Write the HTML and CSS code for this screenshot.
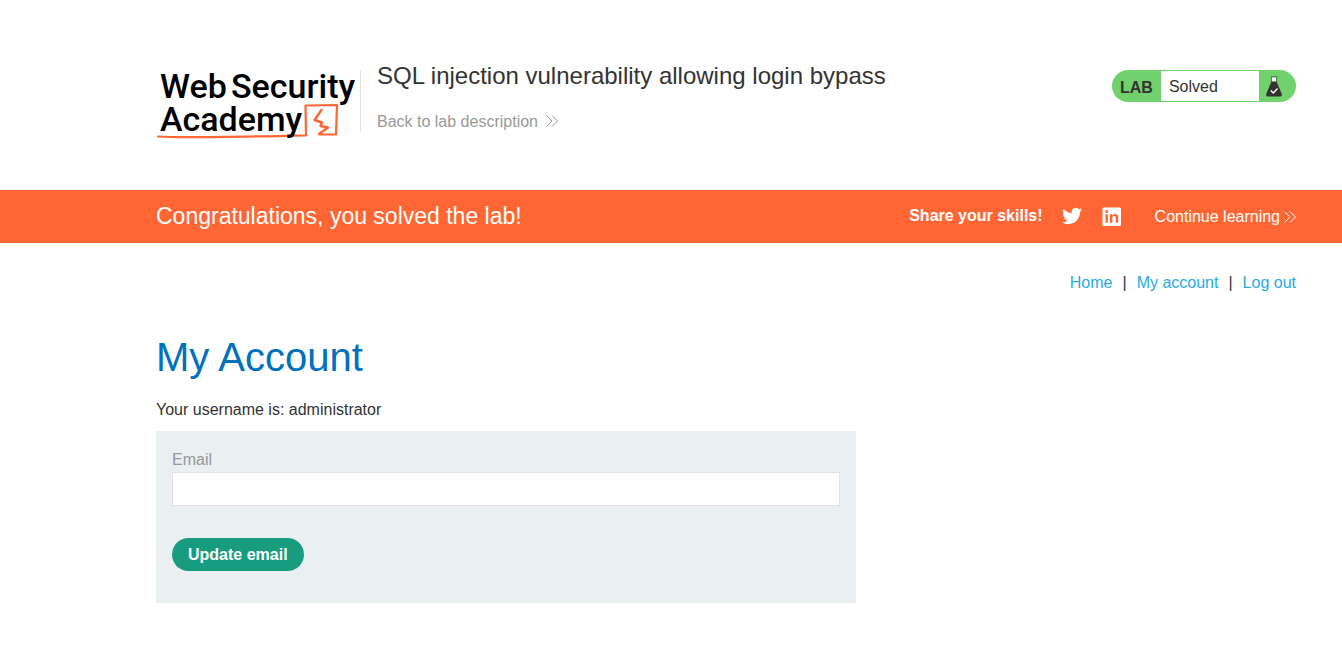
FILE: index.html
```html
<!DOCTYPE html>
<html lang="en">
<head>
<meta charset="utf-8">
<meta name="viewport" content="width=device-width, initial-scale=1">
<title>SQL injection vulnerability allowing login bypass</title>
<link rel="stylesheet" href="styles.css">
</head>
<body>
<header class="lab-header wrap">
  <svg class="logo" width="204" height="80" viewBox="0 0 204 80" role="img" aria-label="Web Security Academy">
    <path class="logo-line" d="M2 76.500C20 78 80 77 150 75.300L149.500 45.500L181 45L180 74.500L164 74.500" stroke-width="2.200"/>
    <path class="logo-line" d="M165.500 50L158.500 60L166 62.500L164.500 66L172 67.500L163 74" stroke-width="2.400"/>
    <text class="logo-text" x="4" y="38">Web</text>
    <text class="logo-text" x="75" y="38">Security</text>
    <text class="logo-text" x="4" y="71">Academy</text>
  </svg>
  <div class="title-block">
    <h2 class="lab-title">SQL injection vulnerability allowing login bypass</h2>
    <a class="back-link" href="#">Back to lab description
      <svg class="chevrons" width="12" height="14" viewBox="0 0 12 14" aria-hidden="true"><path d="M.5.5L6 6L.5 11.500M6 .5L11.500 6L6 11.500"/></svg>
    </a>
  </div>
  <div class="lab-status">
    <span class="status-tag">LAB</span>
    <span class="status-text">Solved</span>
    <svg class="flask" width="16" height="21" viewBox="0 0 16 21" aria-hidden="true">
      <path d="M5.500 1.500H10.500V6H5.500Z" fill="#fff"/>
      <path d="M4.500.7H11.500M5.500 1V6M10.500 1V6" fill="none" stroke="#55795a" stroke-width="1"/>
      <path d="M5.500 5.500H10.500L15.800 18Q16.400 20.500 14 20.500H2Q-.4 20.500.2 18Z" fill="#333332"/>
      <path d="M4.800 14.500L7.300 17L11.500 12.500" fill="none" stroke="#fff" stroke-width="1.400"/>
    </svg>
  </div>
</header>
<section class="banner wrap">
  <h4 class="banner-title">Congratulations, you solved the lab!</h4>
  <div class="share">
    <strong class="share-label">Share your skills!</strong>
    <a class="social" href="#" aria-label="Share on Twitter"><svg width="20" height="20" viewBox="0 0 24 24"><path fill="#fff" d="M23.953 4.570a10 10 0 0 1-2.825.775 4.958 4.958 0 0 0 2.163-2.723c-.951.555-2.005.959-3.127 1.184a4.920 4.920 0 0 0-8.384 4.482C7.690 8.095 4.067 6.130 1.640 3.162a4.822 4.822 0 0 0-.666 2.475c0 1.710.870 3.213 2.188 4.096a4.904 4.904 0 0 1-2.228-.616v.060a4.923 4.923 0 0 0 3.946 4.827 4.996 4.996 0 0 1-2.212.085 4.936 4.936 0 0 0 4.604 3.417 9.867 9.867 0 0 1-6.102 2.105c-.390 0-.779-.023-1.170-.067a13.995 13.995 0 0 0 7.557 2.209c9.053 0 13.998-7.496 13.998-13.985 0-.210 0-.420-.015-.630A9.935 9.935 0 0 0 24 4.590z"/></svg></a>
    <a class="social" href="#" aria-label="Share on LinkedIn"><svg width="20" height="20" viewBox="0 0 20 20"><rect x=".5" y="1.500" width="18.500" height="18.500" rx="1.500" fill="#fff"/><g fill="#ff6633"><circle cx="4.700" cy="5.500" r="1.500"/><path d="M3.500 8.200H5.900V16.700H3.500ZM7.900 8.200H10.200V9.500C11.400 7.300 16.200 7.100 16.200 11.500V16.700H13.800V12C13.800 9.300 10.300 9.500 10.300 12V16.700H7.900Z"/></g></svg></a>
    <a class="continue" href="#">Continue learning
      <svg class="chevrons" width="12" height="12" viewBox="0 0 12 12" aria-hidden="true"><path d="M.5.5L6 6L.5 11.500M6 .5L11.500 6L6 11.500"/></svg>
    </a>
  </div>
</section>
<main class="content wrap">
  <nav class="nav" aria-label="Main">
    <a href="#">Home</a><span>|</span><a href="#">My account</a><span>|</span><a href="#">Log out</a>
  </nav>
  <h1 class="page-title">My Account</h1>
  <p class="username">Your username is: administrator</p>
  <form class="email-form">
    <label class="field-label" for="email">Email</label>
    <input class="field" id="email" type="email" name="email">
    <button class="submit" type="submit">Update email</button>
  </form>
</main>
</body>
</html>
```
FILE: styles.css
```css
* {
  box-sizing: border-box;
}

body {
  margin: 0;
  background: #fff;
  color: #333332;
  font: 16px/24px "Liberation Sans", Arial, sans-serif;
}

h1, h2, h4, p {
  margin: 0;
  font-weight: 400;
}

a {
  text-decoration: none;
}

.wrap {
  padding-left: 156px;
  padding-right: 46px;
}

.lab-header {
  display: flex;
  align-items: flex-start;
  padding-top: 60px;
  padding-bottom: 50px;
}

.logo {
  display: block;
  flex: none;
}

.logo-text {
  font: 500 34px Roboto, sans-serif;
  fill: #000;
}

.logo-line {
  fill: none;
  stroke: #ff6633;
  stroke-linecap: round;
  stroke-linejoin: round;
}

.title-block {
  flex: 1;
  margin-top: 10px;
  padding-left: 16px;
  border-left: 1px solid #e2e2e2;
  height: 62px;
}

.lab-title {
  margin-top: -10px;
  font-size: 24px;
  line-height: 32px;
}

.back-link {
  display: inline-flex;
  align-items: center;
  gap: 8px;
  margin-top: 18px;
  color: #999;
}

.chevrons {
  fill: none;
  stroke: currentColor;
  stroke-width: 1;
}

.lab-status {
  display: flex;
  align-items: center;
  width: 184px;
  height: 32px;
  margin-top: 10px;
  padding: 1px 14px 1px 8px;
  border-radius: 16px;
  background: #71d26d;
}

.status-tag {
  margin-right: 8px;
  padding-top: 4px;
  font-weight: 700;
}

.status-text {
  flex: 1;
  margin-right: 7px;
  padding: 2px 8px 0;
  background: #fff;
  line-height: 28px;
}

.banner {
  display: flex;
  align-items: center;
  justify-content: space-between;
  min-height: 53px;
  padding-bottom: 2px;
  background: #ff6633;
  color: #fff;
}

.banner-title {
  font-size: 23px;
}

.share {
  display: flex;
  align-items: center;
}

.share-label {
  margin-right: 19px;
}

.social {
  display: flex;
  margin-right: 20px;
}

.continue {
  display: flex;
  align-items: center;
  gap: 4px;
  margin-left: 13px;
  padding-top: 2px;
  color: #fff;
}

.nav {
  display: flex;
  justify-content: flex-end;
  gap: 10px;
  padding: 28px 0;
}

.nav a {
  color: #29abe2;
}

.page-title {
  margin-top: 10px;
  color: #0071bc;
  font-size: 40px;
  line-height: 48px;
}

.username {
  margin: 17px 0 9px;
}

.email-form {
  max-width: 700px;
  padding: 17px 16px 32px;
  background: #eaeff2;
}

.field-label {
  display: block;
  color: #999;
}

.field {
  display: block;
  width: 100%;
  height: 34px;
  padding: 0 8px;
  border: 1px solid #e2e2e2;
  background: #fff;
  font: inherit;
}

.submit {
  height: 33px;
  margin-top: 32px;
  padding: 0 16px;
  border: 0;
  border-radius: 17px;
  background: #179c80;
  color: #fff;
  font: bold 16px/33px "Liberation Sans", Arial, sans-serif;
}
```
